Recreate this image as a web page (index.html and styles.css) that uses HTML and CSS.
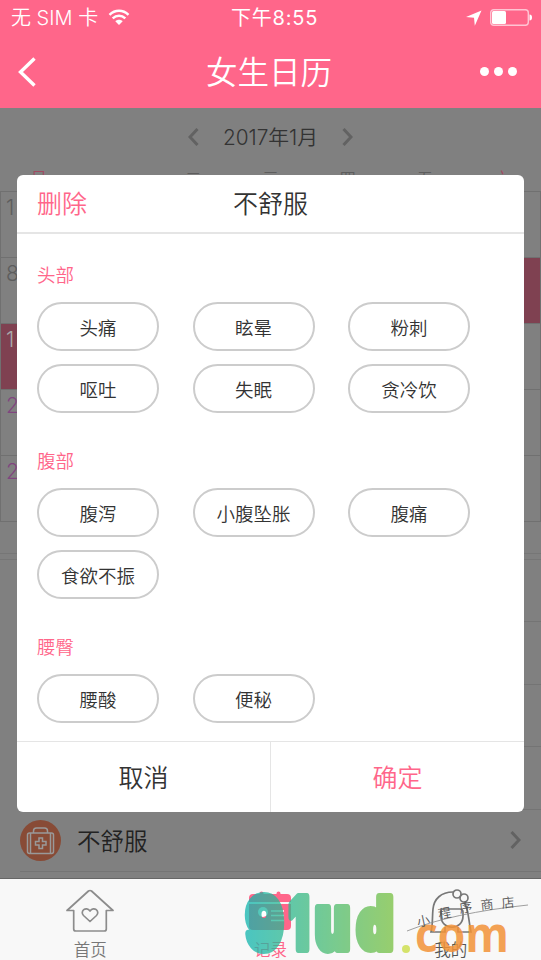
FILE: index.html
```html
<!DOCTYPE html>
<html lang="zh-CN">
<head>
  <meta charset="UTF-8" />
  <title>女生日历</title>
  <link rel="stylesheet" href="styles.css">
</head>
<body>
  <div class="app">
    <header class="header">
      <div class="status">
        <span class="carrier">无 SIM 卡</span>
        <svg class="wifi" width="22" height="17" viewBox="0 0 22 17" fill="none" stroke="#fff" stroke-width="2.5">
          <path d="M1.500 5.800C7 .5 15 .5 20.500 5.800M4.700 9.300c3.700-3.400 8.900-3.400 12.600 0"/>
          <path d="M11 16l-3.700-3.800c2-2 5.400-2 7.400 0z" fill="#fff" stroke="none"/>
        </svg>
        <span class="time">下午8:55</span>
        <svg class="locate" width="16" height="16" viewBox="0 0 16 16" fill="#fff"><path d="M15.500.5L0 7l8 .8.8 8z"/></svg>
        <svg class="battery" width="42" height="17" viewBox="0 0 42 17">
          <rect x=".7" y=".7" width="37.600" height="15.600" rx="3" fill="none" stroke="#ffc4d3" stroke-width="1.400"/>
          <rect x="2" y="2" width="14" height="13" rx="1.500" fill="#fff"/>
          <path d="M39.500 5.500q2.500 0 2.500 3t-2.500 3z" fill="#fff"/>
        </svg>
      </div>
      <div class="nav">
        <svg class="back" width="18" height="30" viewBox="0 0 18 30" fill="none" stroke="#fff" stroke-width="3.400"><path d="M16.500 1.500L2.500 15l14 13.500"/></svg>
        <h1>女生日历</h1>
        <div class="more"><i></i><i></i><i></i></div>
      </div>
    </header>

    <main class="page">
      <div class="month">
        <svg width="11" height="18" viewBox="0 0 11 18"><path d="M9.500 1L2 9l7.500 8"/></svg>
        <span>2017年1月</span>
        <svg width="11" height="18" viewBox="0 0 11 18"><path d="M1.500 1L9 9l-7.500 8"/></svg>
      </div>
      <div class="week">
        <span class="pink">日</span><span>一</span><span>二</span><span>三</span><span>四</span><span>五</span><span class="pink">六</span>
      </div>
      <div class="calendar">
        <div>1</div><div></div><div></div><div></div><div></div><div></div><div></div>
        <div>8</div><div></div><div></div><div></div><div></div><div></div><div class="period"></div>
        <div class="period">15</div><div></div><div></div><div></div><div></div><div></div><div></div>
        <div class="purple">22</div><div></div><div></div><div></div><div></div><div></div><div></div>
        <div class="purple">29</div><div></div><div></div><div></div><div></div><div></div><div></div>
      </div>
      <div class="gap"></div>
      <div class="gap small"></div>
      <div class="records">
        <div class="record"></div>
        <div class="record"></div>
        <div class="record"></div>
        <div class="record"></div>
        <div class="record sick">
          <svg width="41" height="41" viewBox="0 0 41 41" fill="none" stroke="#999" stroke-width="1.500">
            <circle cx="20.500" cy="20.500" r="20.500" fill="#884b36" stroke="none"/>
            <rect x="7.500" y="13" width="26" height="20.500" rx="2"/>
            <path d="M10.500 13v20.500M30.500 13v20.500M13.500 13v-2q0-3 3-3h8q3 0 3 3v2"/>
            <path d="M19 18h3.500v3.500H26V25h-3.500v3.500H19V25h-3.500v-3.500H19z"/>
          </svg>
          <span>不舒服</span>
          <svg class="arrow" width="11" height="18" viewBox="0 0 11 18"><path d="M1.500 1L9 9l-7.500 8"/></svg>
        </div>
      </div>
    </main>

    <nav class="tabs">
      <div class="tab">
        <svg width="48" height="44" viewBox="0 0 48 44" fill="none" stroke="#8c8c8c" stroke-width="1.700" stroke-linejoin="round">
          <path d="M7.700 21.500H1L22.500 2q1.500-1 3 0L47 21.500h-6.700V40q0 2-2 2H9.700q-2 0-2-2z"/>
          <path d="M24 32.500l-6.500-6c-4-4 2.500-10 6.500-4.500 4-5.500 10.500.5 6.500 4.500z"/>
        </svg>
        <span>首页</span>
      </div>
      <div class="tab active">
        <svg width="48" height="44" viewBox="0 0 48 44">
          <path d="M7 5h34q4 0 4 4v4H3V9q0-4 4-4zM3 15h42v22q0 4-4 4H7q-4 0-4-4z" fill="#ff668a"/>
          <path d="M15.500 4.500v5M32.500 4.500v5" stroke="#ff668a" stroke-width="4" stroke-linecap="round"/>
          <circle cx="17" cy="23" r="5" fill="#fff"/>
          <path d="M25 22h13M25 26.500h13M25 31.500h13" stroke="#fff" stroke-width="1.500"/>
        </svg>
        <span>记录</span>
      </div>
      <div class="tab mine">
        <svg width="48" height="44" viewBox="0 0 48 44" fill="none" stroke="#777" stroke-width="1.700">
          <path d="M26 3C14 3 7 10 6 20c-1 10 0 15-2 23h14v-5M37 13c5 8 4 16 7 30H31v-5"/>
          <path d="M16 20h17q3 0 3 3v4c0 15-22 15-22 0v-4q0-3 2-3z"/>
          <circle cx="30" cy="5" r="4"/><circle cx="37" cy="9" r="4"/>
        </svg>
        <span>我的</span>
      </div>
    </nav>
  </div>

  <div class="dialog">
    <div class="dialog-head"><span class="delete">删除</span><h2>不舒服</h2></div>
    <div class="dialog-body">
      <section>
        <h3>头部</h3>
        <div class="options">
          <button>头痛</button><button>眩晕</button><button>粉刺</button>
          <button>呕吐</button><button>失眠</button><button>贪冷饮</button>
        </div>
      </section>
      <section>
        <h3>腹部</h3>
        <div class="options">
          <button>腹泻</button><button>小腹坠胀</button><button>腹痛</button>
          <button>食欲不振</button>
        </div>
      </section>
      <section>
        <h3>腰臀</h3>
        <div class="options">
          <button>腰酸</button><button>便秘</button>
        </div>
      </section>
    </div>
    <div class="dialog-foot"><div>取消</div><div class="ok">确定</div></div>
  </div>

  <!-- site logo over the tab bar -->
  <svg class="logo" width="300" height="80" viewBox="236 880 300 80">
    <defs>
      <linearGradient id="fade" gradientUnits="userSpaceOnUse" x1="244" y1="0" x2="394" y2="0">
        <stop offset="0" stop-color="#10b5b0"/><stop offset="1" stop-color="#78c040"/>
      </linearGradient>
    </defs>
    <g class="logo-name" fill="url(#fade)" stroke="url(#fade)">
      <text x="246" y="949" textLength="37" lengthAdjust="spacingAndGlyphs">9</text>
      <text x="289" y="949" textLength="20" lengthAdjust="spacingAndGlyphs">1</text>
      <text class="low" x="315" y="949" textLength="35" lengthAdjust="spacingAndGlyphs">u</text>
      <text x="357" y="949" textLength="36" lengthAdjust="spacingAndGlyphs">d</text>
    </g>
    <circle cx="406" cy="949" r="4" fill="#d5e36b"/>
    <text class="logo-com" x="415" y="952" textLength="94" lengthAdjust="spacingAndGlyphs">com</text>
    <path d="M407 931Q452 913 528 905" fill="none" stroke="#888" stroke-width=".8"/>
    <g class="logo-store">
      <text transform="translate(418 927) rotate(-12)">小</text>
      <text transform="translate(439 919) rotate(-10)">程</text>
      <text transform="translate(460 913) rotate(-8)">序</text>
      <text transform="translate(481 910) rotate(-6)">商</text>
      <text transform="translate(502 908) rotate(-6)">店</text>
    </g>
  </svg>
</body>
</html>
```

FILE: styles.css
```css
* {
  box-sizing: border-box;
}

body {
  margin: 0;
  width: 541px;
  height: 960px;
  overflow: hidden;
  position: relative;
  font-family: "Liberation Sans", "Noto Sans CJK SC", sans-serif;
  font-weight: 350;
  color: #333;
  background: #808080;
}

h1, h2, h3 {
  margin: 0;
  font-weight: 350;
}

.app {
  height: 960px;
  display: flex;
  flex-direction: column;
}

.header {
  height: 108px;
  flex: none;
  background: #ff668a;
  color: #fff;
}

.status {
  height: 35px;
  display: grid;
  grid-template-columns: 97px 123px 1fr 24px 42px;
  align-items: center;
  padding: 0 9px 0 11px;
  font-family: Inter, "Noto Sans CJK SC", sans-serif;
  font-size: 20px;
  line-height: 34px;
  white-space: nowrap;
}

.time {
  font-weight: 400;
  letter-spacing: .8px;
}

.nav {
  height: 73px;
  display: grid;
  grid-template-columns: 40px 1fr 40px;
  align-items: center;
  padding: 0 21px 0 18px;
}

.nav h1 {
  padding-top: 2px;
  font-size: 31.5px;
  line-height: 70px;
  text-align: center;
}

.more {
  display: flex;
  gap: 5px;
}

.more i {
  width: 9px;
  height: 9px;
  border-radius: 50%;
  background: #fff;
}

.page {
  flex: 1;
  min-height: 0;
  background: #808080;
}

.month {
  height: 58px;
  display: flex;
  align-items: center;
  justify-content: center;
  gap: 24px;
  font-family: Inter, "Noto Sans CJK SC", sans-serif;
  font-size: 20.8px;
}

.month span {
  margin-top: -3px;
}

.month svg, .arrow {
  fill: none;
  stroke: #626262;
  stroke-width: 3;
}

.week {
  height: 25px;
  display: grid;
  grid-template-columns: repeat(7, 1fr);
  text-align: center;
  font-size: 16px;
  line-height: 26px;
  overflow: hidden;
  color: #5d5d5d;
}

.week .pink {
  color: #a04a60;
}

.calendar {
  display: grid;
  grid-template-columns: repeat(7, 1fr);
  grid-auto-rows: 66px;
  border: 1px solid #707070;
  border-bottom: 0;
}

.calendar div {
  border-bottom: 1px solid #707070;
  padding: 3px 5px;
  font-family: Inter, sans-serif;
  font-size: 21px;
  letter-spacing: 3px;
  color: #5d5d5d;
}

.calendar .period {
  background: #7f4151;
  color: #aaa;
}

.calendar .purple {
  color: #80457f;
}

.gap {
  height: 32px;
  border-bottom: 1px solid #767676;
}

.gap.small {
  height: 6px;
}

.records {
  padding-left: 20px;
}

.record {
  height: 62.4px;
  border-bottom: 1px solid #747474;
}

.sick {
  display: flex;
  align-items: center;
  color: #222;
  font-size: 23.5px;
  padding-right: 20px;
}

.sick span {
  margin-left: 16px;
}

.sick .arrow {
  margin-left: auto;
}

.tabs {
  height: 82px;
  flex: none;
  display: grid;
  grid-template-columns: repeat(3, 1fr);
  background: #f8f8f8;
  border-top: 1px solid #666;
}

.tab {
  display: flex;
  flex-direction: column;
  align-items: center;
  padding-top: 10px;
  font-size: 16.5px;
  color: #777;
}

.tab span {
  line-height: 22px;
  margin-top: 6px;
}

.tab.active span {
  color: #ff668a;
}

.tab.mine span {
  color: #555;
}

.dialog {
  position: absolute;
  left: 17px;
  top: 175px;
  width: 507px;
  height: 637px;
  border-radius: 6px;
  background: #fff;
  display: flex;
  flex-direction: column;
  overflow: hidden;
}

.dialog-head {
  height: 59px;
  flex: none;
  display: grid;
  grid-template-columns: 100px 1fr 100px;
  padding: 0 20px;
  border-bottom: 2px solid #e5e5e5;
  font-size: 25px;
  line-height: 58px;
}

.dialog-head h2 {
  font-size: 25px;
  text-align: center;
}

.delete, .ok, .dialog h3 {
  color: #ff668a;
}

.dialog-body {
  flex: 1;
  min-height: 0;
  padding: 29px 20px 0;
}

.dialog-body section {
  margin-bottom: 36px;
}

.dialog h3 {
  font-size: 18.5px;
  line-height: 26px;
  margin-bottom: 13px;
}

.options {
  display: grid;
  grid-template-columns: repeat(3, 122px);
  column-gap: 33.5px;
  row-gap: 13px;
}

.options button {
  height: 49px;
  padding: 4px 0 0;
  border: 2px solid #ccc;
  border-radius: 25px;
  background: #fff;
  color: #333;
  font: inherit;
  font-size: 18.5px;
  line-height: 41px;
}

.dialog-foot {
  height: 71px;
  flex: none;
  display: grid;
  grid-template-columns: 253px 1fr;
  border-top: 1px solid #e5e5e5;
  font-size: 25px;
  line-height: 73px;
  text-align: center;
}

.dialog-foot .ok {
  border-left: 1px solid #e5e5e5;
}

.logo {
  position: absolute;
  left: 236px;
  top: 880px;
}

.logo-name {
  font-family: Inter, sans-serif;
  font-size: 71px;
  font-weight: 900;
  stroke-width: 8;
  stroke-linejoin: round;
  opacity: .75;
}

.logo-name .low {
  font-size: 76px;
}

.logo-com {
  font-family: "Open Sans", sans-serif;
  font-size: 49px;
  font-weight: 700;
  fill: #f39338;
  opacity: .85;
}

.logo-store {
  font-size: 13px;
  fill: #555;
}
```
